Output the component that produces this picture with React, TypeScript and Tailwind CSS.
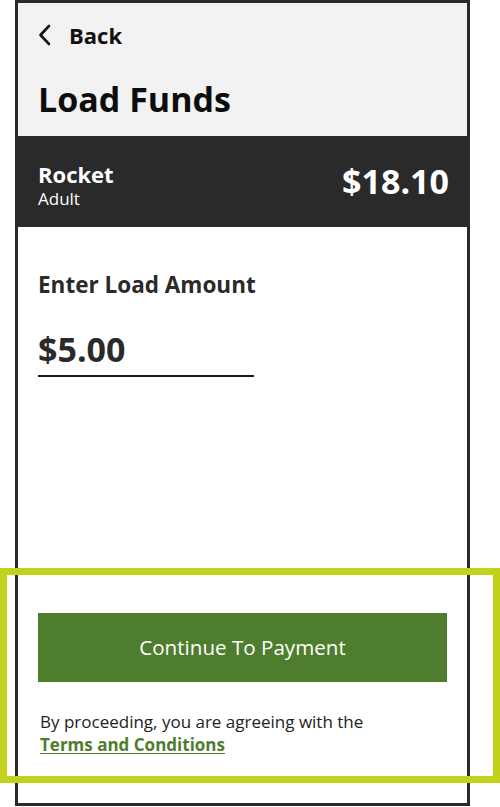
import React, { useState } from 'react';

const font = { fontFamily: '"Open Sans", "Liberation Sans", sans-serif' };

const App: React.FC = () => {
  const [amount] = useState('$5.00');

  return (
    <div className="relative w-[500px] h-[807px] bg-white" style={font}>
      {/* phone frame */}
      <div className="ml-[15px] w-[455px] h-[806px] border-[3px] border-[#2a2a2a] flex flex-col bg-white">
        <div className="bg-[#f2f2f2] px-5 pt-[17px] pb-[17px]">
          <button className="flex items-center h-[30px] text-[#111] font-bold text-[22px] leading-[30px]">
            <svg width="14" height="22" viewBox="0 0 14 22" fill="none" className="mr-[17px]">
              <path d="M11 2 L2.5 11 L11 20" stroke="#111" strokeWidth="2.6" strokeLinecap="round" strokeLinejoin="round" />
            </svg>
            Back
          </button>
          <h1 className="mt-[29px] text-[34px] leading-[40px] font-bold text-[#0d0d0d]">Load Funds</h1>
        </div>

        <div className="bg-[#2a2a2a] px-5 pt-[25px] pb-[17px] flex justify-between items-start text-white">
          <div>
            <p className="text-[22px] leading-[27px] font-bold">Rocket</p>
            <p className="text-[17px] leading-[22px]">Adult</p>
          </div>
          <p className="text-[34px] leading-[40px] font-bold -mr-[2px]">$18.10</p>
        </div>

        <div className="px-5 pt-[43px] flex-1 flex flex-col">
          <p className="text-[22.5px] leading-[30px] font-bold text-[#2a2a2a]">Enter Load Amount</p>
          <div className="mt-[29px] w-[216px] border-b-2 border-[#1a1a1a] pb-[6px]">
            <p className="text-[34px] leading-[40px] font-bold text-[#2a2a2a]">{amount}</p>
          </div>
          <div className="flex-1" />
          <button className="w-full h-[69px] bg-[#4e7d2e] text-white text-[20.6px]">Continue To Payment</button>
          <div className="mt-[28px] pl-[2px] text-[17px] leading-[23px] text-[#222]">
            <p>By proceeding, you are agreeing with the</p>
            <a href="#" className="font-bold text-[#4e7d2e] underline underline-offset-2">Terms and Conditions</a>
          </div>
          <div className="h-[47px]" />
        </div>
      </div>

      {/* highlight box */}
      <div className="absolute left-0 top-[568px] w-[500px] h-[215px] border-[7px] border-[#c2d11a] pointer-events-none" />
    </div>
  );
};

export default App;
